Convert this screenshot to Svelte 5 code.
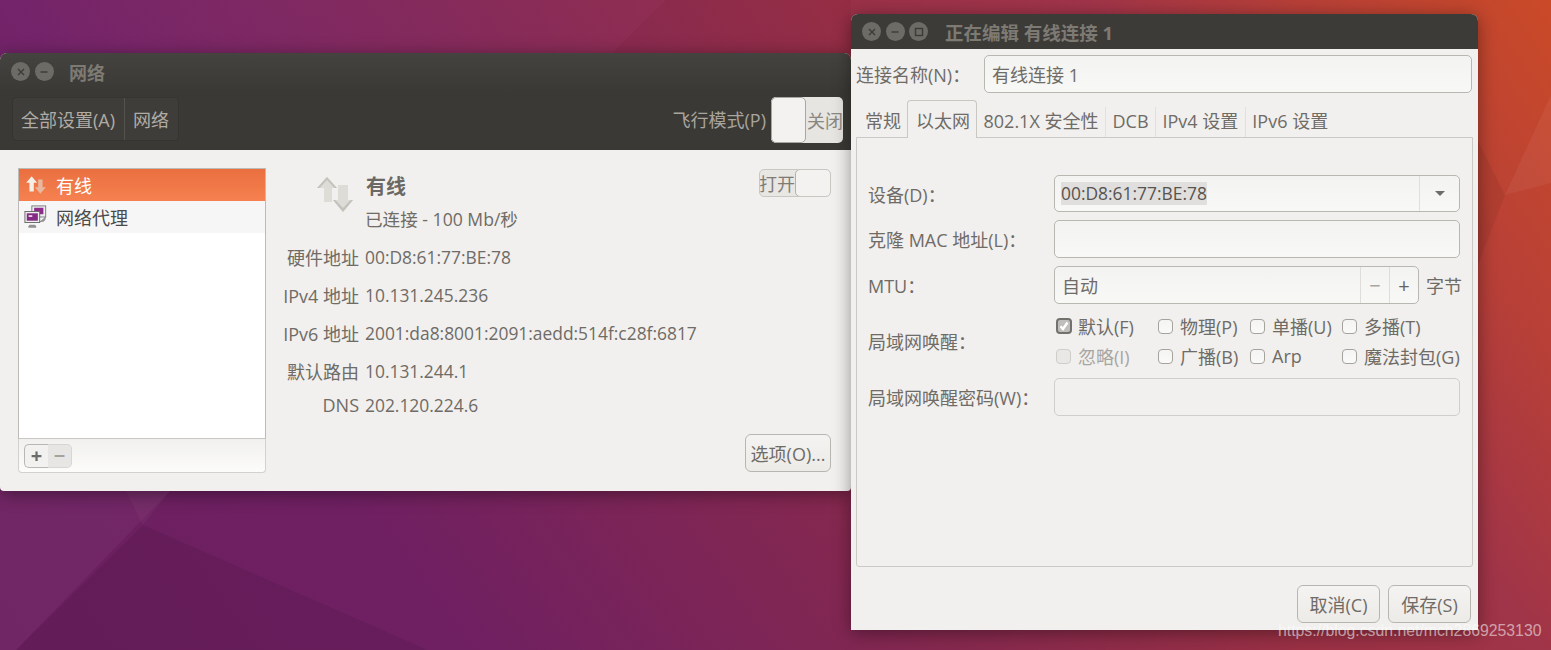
<script>
  const details = [
    ['硬件地址', '00:D8:61:77:BE:78'],
    ['IPv4 地址', '10.131.245.236'],
    ['IPv6 地址', '2001:da8:8001:2091:aedd:514f:c28f:6817'],
    ['默认路由', '10.131.244.1'],
    ['DNS', '202.120.224.6']
  ];
  const tabs = ['常规', '以太网', '802.1X 安全性', 'DCB', 'IPv4 设置', 'IPv6 设置'];
  const wol = [
    ['默认(F)', 'checked'], ['物理(P)', ''], ['单播(U)', ''], ['多播(T)', ''],
    ['忽略(I)', 'disabled'], ['广播(B)', ''], ['Arp', ''], ['魔法封包(G)', '']
  ];
</script>

<main class="desktop">
  <svg class="facets" viewBox="0 0 1551 650" preserveAspectRatio="none" aria-hidden="true">
    <polygon points="666,0 851,0 851,53 612,53" fill="#500" opacity="0.06" />
    <polygon points="0,491 170,491 16,650 0,650" fill="#fff" opacity="0.035" />
    <polygon points="126,491 170,491 143,525" fill="#fff" opacity="0.03" />
    <polygon points="143,525 428,650 16,650" fill="#000" opacity="0.07" />
    <polygon points="1505,195 1551,95 1551,183" fill="#fff" opacity="0.05" />
    <polygon points="1478,141 1505,195 1478,265" fill="#000" opacity="0.06" />
  </svg>

  <section class="win net">
    <header class="head">
      <div class="titlebar">
        <span class="wbtn"><svg viewBox="0 0 10 10"><path d="M2 2l6 6M8 2l-6 6" /></svg></span>
        <span class="wbtn"><svg viewBox="0 0 10 10"><path d="M1.5 5h7" /></svg></span>
        <span class="wtitle net-title">网络</span>
      </div>
      <div class="toolbar">
        <div class="crumbs"><span class="crumb">全部设置(A)</span><span class="crumb">网络</span></div>
        <span class="plane">飞行模式(P)</span>
        <div class="switch dark"><span class="knob"></span><span class="swtext">关闭</span></div>
      </div>
    </header>
    <div class="net-body">
      <div class="side">
        <ul class="list">
          <li class="row sel">
            <svg class="rowicon" viewBox="0 0 22 22">
              <path d="M7 3l5 6H9v8H5V9H2z" fill="#f4eee8" />
              <path d="M15 19l-5-6h3V6h4v7h3z" fill="#e9b79f" />
            </svg>
            有线
          </li>
          <li class="row alt">
            <svg class="rowicon" viewBox="0 0 26 26">
              <rect x="8.5" y="1" width="15" height="12" fill="#eee" stroke="#777" />
              <rect x="11" y="3" width="10" height="7" fill="#8d2a8a" />
              <rect x="1" y="7" width="16" height="12" fill="#eee" stroke="#666" />
              <rect x="3" y="9" width="12" height="8" fill="#842a83" />
              <rect x="5" y="11" width="4" height="2" fill="#e6cfe6" />
              <path d="M6 22h6l1 2H5zM17 18c5 0 6-1 6-5" fill="#999" stroke="#888" />
            </svg>
            网络代理
          </li>
        </ul>
        <div class="listbar">
          <div class="pm"><span class="pmb on">+</span><span class="pmb off">−</span></div>
        </div>
      </div>

      <div class="info">
        <div class="infohead">
          <svg class="bigicon" viewBox="0 0 36 38">
            <path d="M10 2l10 11h-5v14H7V13H0z" fill="#dedcd6" />
            <path d="M10 2l10 11h-2.5L10 5 2.500 13H0z" fill="#c4c2bc" />
            <path d="M26 37L16 25h5V10h10v15h5z" fill="#dedcd6" />
            <path d="M26 37L16 25h2.500L26 33l7.500-8H36z" fill="#c4c2bc" />
          </svg>
          <div class="status">
            <strong>有线</strong>
            <span>已连接 - 100 Mb/秒</span>
          </div>
          <div class="switch light"><span class="swtext">打开</span><span class="knob"></span></div>
        </div>
        <dl class="dl">
          {#each details as [k, v]}
            <dt>{k}</dt><dd>{v}</dd>
          {/each}
        </dl>
        <div class="optrow"><button class="btn opt">选项(O)...</button></div>
      </div>
    </div>
  </section>

  <section class="win edit">
    <header class="titlebar edit-title">
      <span class="wbtn"><svg viewBox="0 0 10 10"><path d="M2 2l6 6M8 2l-6 6" /></svg></span>
      <span class="wbtn"><svg viewBox="0 0 10 10"><path d="M1.5 5h7" /></svg></span>
      <span class="wbtn"><svg viewBox="0 0 10 10"><rect x="1.5" y="1.5" width="7" height="7" /></svg></span>
      <span class="wtitle strong">正在编辑 有线连接 1</span>
    </header>
    <div class="edit-body">
      <div class="name-row">
        <span class="name-label">连接名称(N)：</span>
        <div class="entry name-entry">有线连接 1</div>
      </div>
      <div class="tabs">
        {#each tabs as t, i}
          <span class="tab" class:active={i === 1}>{t}</span>
        {/each}
      </div>
      <div class="page">
        <div class="form">
          <span class="flabel">设备(D)：</span>
          <div class="entry combo"><span class="seltext">00:D8:61:77:BE:78</span><span class="caret"><i></i></span></div>
          <span class="flabel">克隆 MAC 地址(L)：</span>
          <div class="entry"></div>
          <span class="flabel">MTU：</span>
          <div class="mtu">
            <div class="entry spin"><span class="spintext">自动</span><span class="sbtn dim">−</span><span class="sbtn">+</span></div>
            <span class="unit">字节</span>
          </div>
          <span class="flabel">局域网唤醒：</span>
          <div class="wol">
            {#each wol as [text, state]}
              <span class="chk" class:dis={state === 'disabled'}>
                <span class="box" class:checked={state === 'checked'}>
                  {#if state === 'checked'}
                    <svg viewBox="0 0 12 12"><path d="M2.500 6.200l2.500 2.800 4.500-6.500" /></svg>
                  {/if}
                </span>
                {text}
              </span>
            {/each}
          </div>
          <span class="flabel">局域网唤醒密码(W)：</span>
          <div class="entry insensitive"></div>
        </div>
      </div>
      <div class="actions">
        <button class="btn act">取消(C)</button>
        <button class="btn act">保存(S)</button>
      </div>
    </div>
  </section>

  <span class="mark">https://blog.csdn.net/mch2869253130</span>
</main>

<style>
  :global(body) { margin: 0; }
  .desktop {
    position: relative;
    width: 1551px;
    height: 650px;
    overflow: hidden;
    background:
      radial-gradient(ellipse 900px 340px at 250px 0, rgba(150, 70, 170, 0.14), rgba(150, 70, 170, 0)),
      linear-gradient(55deg, #6b1f5f 0%, #6f2062 23%, #85284f 47%, #9a3044 65%, #a03448 77%, #b63f38 87%, #ca4a28 100%);
    font-family: "Open Sans", "Noto Sans CJK SC", sans-serif;
    font-size: 18px;
    color: #6f6b66;
  }
  .facets { position: absolute; inset: 0; width: 100%; height: 100%; }
  .win {
    position: absolute;
    background: #f1f0ee;
    box-shadow: 0 3px 18px rgba(0, 0, 0, 0.4);
    display: flex;
    flex-direction: column;
  }
  .net { left: 0; top: 53px; width: 851px; height: 438px; border-radius: 7px 7px 4px 4px; }
  .edit { left: 851px; top: 14px; width: 627px; height: 616px; border-radius: 7px 7px 0 0; }

  .head { background: linear-gradient(#44433f, #3b3935 40%); height: 97px; border-radius: 7px 7px 0 0; flex: none; box-sizing: border-box; }
  .titlebar { display: flex; align-items: center; gap: 4.500px; height: 37px; padding: 0 0 0 11px; }
  .edit-title { height: 35px; background: #3d3b37; border-radius: 7px 7px 0 0; flex: none; }
  .wbtn {
    width: 19px;
    height: 19px;
    border-radius: 50%;
    background: #6d6b66;
    display: flex;
    align-items: center;
    justify-content: center;
  }
  .wbtn svg { width: 10px; height: 10px; fill: none; stroke: #3d3b37; stroke-width: 1.4; }
  .wtitle { color: #7d7a74; font-size: 18px; font-weight: 700; }
  .net-title { margin-left: 11px; }
  .strong { margin-left: 12.500px; font-size: 18.500px; }

  .toolbar { display: flex; align-items: center; height: 44px; margin-top: 7px; padding: 0 8px 0 12px; }
  .crumbs {
    display: flex;
    height: 44px;
    border: 1px solid #363431;
    box-sizing: border-box;
    border-radius: 4px;
    background: #3f3d39;
  }
  .crumb { display: flex; align-items: center; padding: 0 9px 0 8px; color: #b0aca5; }
  .crumb + .crumb { border-left: 1px solid #55534e; }
  .plane { margin-left: auto; margin-right: 5px; color: #a8a59f; }

  .switch { display: flex; align-items: center; box-sizing: border-box; overflow: hidden; }
  .switch.dark {
    width: 72px;
    height: 46px;
    background: #e6e5e2;
    border-radius: 5px;
    margin-top: 2px;
  }
  .switch.dark .knob { width: 35px; height: 100%; flex: none; background: #f3f2f0; border: 1px solid #a8a6a1; border-radius: 5px; box-sizing: border-box; }
  .switch.dark .swtext { padding-left: 1px; color: #8a8781; white-space: nowrap; }
  .switch.light {
    width: 72px;
    height: 28px;
    background: #e8e7e4;
    border: 1px solid #c9c7c2;
    border-radius: 5px;
    margin-left: auto;
    margin-top: 1px;
  }
  .switch.light .swtext { width: 36px; flex: none; color: #7f7c76; white-space: nowrap; margin-left: -1px; }
  .switch.light .knob { width: 36px; height: 28px; flex: none; background: #f3f2f0; border: 1px solid #b3b1ac; border-radius: 5px; box-sizing: border-box; }

  .net-body { flex: 1; display: flex; padding: 18px 20px 18px 18px; gap: 20px; min-height: 0; }
  .side { width: 248px; flex: none; display: flex; flex-direction: column; }
  .list {
    list-style: none;
    margin: 0;
    padding: 0;
    flex: 1;
    background: #fff;
    border: 1px solid #bdbbb7;
    border-bottom-color: #c9c7c3;
  }
  .row { height: 32px; display: flex; align-items: center; gap: 8px; padding-left: 5px; box-sizing: border-box; color: #4c4a48; }
  .rowicon { width: 24px; height: 24px; flex: none; }
  .sel { background: linear-gradient(#ea6f3f, #f68150); color: #fff; }
  .alt { background: #f6f6f6; }
  .listbar {
    height: 34px;
    flex: none;
    box-sizing: border-box;
    border: 1px solid #d3d1cd;
    border-top: none;
    border-radius: 0 0 4px 4px;
    background: linear-gradient(#f1f0ee, #fcfcfb);
    padding: 5px;
  }
  .pm { display: flex; width: 48px; height: 24px; }
  .pmb { flex: 1; display: flex; align-items: center; justify-content: center; font-size: 20px; line-height: 1; font-weight: 700; }
  .pmb.on { color: #6b6b6b; background: #f2f1ef; border: 1px solid #b9b7b3; border-right: none; border-radius: 5px 0 0 5px; }
  .pmb.off { color: #a5a39f; background: #e7e6e4; border: 1px solid #d8d6d2; border-left: none; border-radius: 0 5px 5px 0; }

  .info { flex: 1; display: flex; flex-direction: column; min-width: 0; }
  .infohead { display: flex; align-items: flex-start; height: 62px; flex: none; padding-left: 31px; }
  .bigicon { width: 36px; height: 38px; flex: none; margin-right: 13px; margin-top: 7px; }
  .status { display: flex; flex-direction: column; gap: 7px; padding-top: 5px; }
  .status strong { font-size: 20px; line-height: 28px; color: #6b6863; }
  .status span { line-height: 24px; font-size: 17.600px; margin-top: -1px; margin-left: -1px; }
  .dl {
    margin: 8px 0 0 -6px;
    display: grid;
    grid-template-columns: 79px 1fr;
    column-gap: 6px;
    grid-template-rows: 38px 38px 38px 38px 30px;
    align-items: center;
  }
  dt { text-align: right; white-space: nowrap; }
  dd { margin: 0; white-space: nowrap; font-size: 17.400px; }
  .optrow { margin-top: auto; margin-bottom: 1px; display: flex; justify-content: flex-end; }

  .btn {
    font: inherit;
    color: #6f6b66;
    background: linear-gradient(#f4f3f1, #ecebe8);
    border: 1px solid #b8b6b1;
    border-radius: 6px;
    padding: 0;
  }
  .opt { width: 86px; height: 38px; }

  .edit-body { flex: 1; display: flex; flex-direction: column; padding: 6px 5px 7px; min-height: 0; }
  .name-row { display: flex; align-items: center; height: 38px; flex: none; }
  .name-label { width: 128px; flex: none; white-space: nowrap; }
  .name-entry { flex: 1; margin-right: 1px; padding-left: 7px; }
  .entry {
    box-sizing: border-box;
    border: 1px solid #b9b7b2;
    border-radius: 5px;
    background: linear-gradient(#f3f3f2, #f8f8f7);
    display: flex;
    align-items: center;
    min-width: 0;
    height: 38px;
  }
  .tabs { display: flex; align-items: flex-end; height: 37px; margin-top: 7px; flex: none; padding-left: 0; position: relative; z-index: 1; }
  .tab {
    height: 30px;
    line-height: 28px;
    padding: 0 6.500px;
    border-right: 1px solid #e2e0dd;
    white-space: nowrap;
    box-sizing: border-box;
  }
  .tab:last-child { border-right: none; }
  .tab:first-child { padding-left: 9px; padding-right: 6px; border-right: none; }
  .tab.active {
    height: 38px;
    margin-bottom: -1px;
    line-height: 40px;
    background: #f1f0ee;
    border: 1px solid #c9c7c2;
    border-bottom: none;
    border-radius: 4px 4px 0 0;
    padding: 0 6px 0 8px;
  }
  .page { height: 430px; flex: none; box-sizing: border-box; border: 1px solid #cbc9c5; border-radius: 0 0 3px 3px; padding: 37px 12px 0 11px; }
  .form { display: grid; grid-template-columns: 186px 1fr; grid-template-rows: 37px 38px 38px 58px 38px; row-gap: 8px; align-items: center; }
  .flabel { white-space: nowrap; }
  .combo { justify-content: space-between; padding-left: 6px; height: 37px; }
  .seltext { background: #e0dfdd; color: #57534f; line-height: 23px; font-size: 17.400px; }
  .caret { width: 39px; height: 100%; border-left: 1px solid #e0dfdc; display: flex; align-items: center; justify-content: center; }
  .caret i { width: 0; height: 0; border-left: 5px solid transparent; border-right: 5px solid transparent; border-top: 5px solid #6f6c68; }
  .mtu { display: flex; align-items: center; gap: 7px; }
  .spin { flex: 1; }
  .spintext { flex: 1; padding-left: 7px; }
  .sbtn { width: 28px; height: 100%; border-left: 1px solid #dfddda; display: flex; align-items: center; justify-content: center; color: #66635f; font-size: 20px; }
  .sbtn.dim { color: #a9a7a3; }
  .unit { white-space: nowrap; margin-right: -2px; }
  .wol {
    display: grid;
    grid-template-columns: 102px 92px 92px auto;
    grid-template-rows: 30px 30px;
    align-items: center;
    padding-left: 2px;
  }
  .chk { display: flex; align-items: center; gap: 7px; white-space: nowrap; }
  .dis { color: #a8a6a2; }
  .box {
    width: 15px;
    height: 15px;
    box-sizing: border-box;
    flex: none;
    border: 1px solid #a5a39e;
    border-radius: 4px;
    background: linear-gradient(#f4f4f3, #fafaf9);
  }
  .dis .box { background: #e9e8e6; border-color: #cfcdc9; }
  .box.checked { width: 16px; height: 16px; margin-right: -1px; background: #c0bebb; border: 2px solid #73716d; }
  .box svg { display: block; width: 100%; height: 100%; fill: none; stroke: #fff; stroke-width: 2.4; }
  .insensitive { background: #f1f0ee; border-color: #d0ceca; }
  .actions { margin-top: auto; display: flex; justify-content: flex-end; gap: 8px; padding-right: 2px; }
  .act { width: 83px; height: 38px; }
  .mark {
    position: absolute;
    left: 1278px;
    top: 621px;
    font-family: "Liberation Sans", sans-serif;
    font-size: 15.800px;
    line-height: 19px;
    color: rgba(255, 255, 255, 0.55);
    white-space: nowrap;
  }
</style>
